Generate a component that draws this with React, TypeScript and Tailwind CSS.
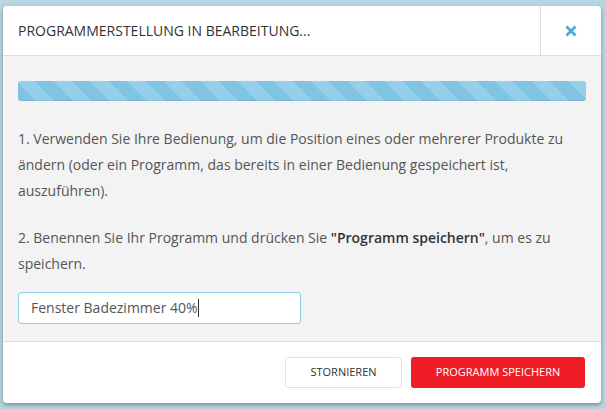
import React from 'react';

const App: React.FC = () => {
  return (
    <div className="w-[606px] h-[409px] bg-[#b8d6e1] pt-[6px] pl-[3px] pr-[5px] pb-[6px] font-['Open_Sans',sans-serif]">
      <div className="w-[598px] h-[397px] bg-white rounded-[4px] shadow-[0_2px_4px_rgba(0,0,0,0.35)] flex flex-col overflow-hidden">
        {/* Header */}
        <div className="h-[50px] flex border-b border-[#dcdcdc]">
          <div className="flex-1 flex items-center pl-[15px] text-[14px] text-[#333]">
            PROGRAMMERSTELLUNG IN BEARBEITUNG...
          </div>
          <div className="w-[61px] flex items-center justify-center border-l border-[#dcdcdc]">
            <svg width="12" height="12" viewBox="0 0 12 12">
              <path d="M1.5 1.5 L10.5 10.5 M10.5 1.5 L1.5 10.5" stroke="#4aa6d6" strokeWidth="2.6" strokeLinecap="butt" />
            </svg>
          </div>
        </div>

        {/* Body */}
        <div className="flex-1 bg-[#f3f3f3] pt-[25px] px-[15px] text-[14px] leading-[26px] text-[#555]">
          <div className="h-[20px] rounded-[3px] bg-[#80c3e3] bg-[repeating-linear-gradient(45deg,#80c3e3_0px,#80c3e3_13px,#96cfe9_13px,#96cfe9_26px)] shadow-[inset_0_-1px_0_rgba(0,0,0,0.08)]" />
          <p className="mt-[25px]">
            1. Verwenden Sie Ihre Bedienung, um die Position eines oder mehrerer Produkte zu ändern (oder ein Programm, das bereits in einer Bedienung gespeichert ist, auszuführen).
          </p>
          <p className="mt-[21px] pr-[10px]">
            2. Benennen Sie Ihr Programm und drücken Sie <b className="font-semibold text-[#333]">"Programm speichern"</b>, um es zu speichern.
          </p>
          <div className="mt-[15px] w-[283px] h-[32px] bg-white border border-[#8ccbea] rounded-[3px] flex items-center pl-[12px] text-[14px] text-[#555]">
            Fenster Badezimmer 40%
            <span className="inline-block w-px h-[18px] bg-[#333]" />
          </div>
        </div>

        {/* Footer */}
        <div className="h-[62px] border-t border-[#dcdcdc] flex items-center justify-end gap-[9px] pr-[16px]">
          <button className="w-[117px] h-[31px] bg-white border border-[#e0e0e0] rounded-[3px] text-[11px] text-[#333]">
            STORNIEREN
          </button>
          <button className="w-[174px] h-[31px] bg-[#ee1c25] rounded-[3px] text-[11px] text-white">
            PROGRAMM SPEICHERN
          </button>
        </div>
      </div>
    </div>
  );
};

export default App;
